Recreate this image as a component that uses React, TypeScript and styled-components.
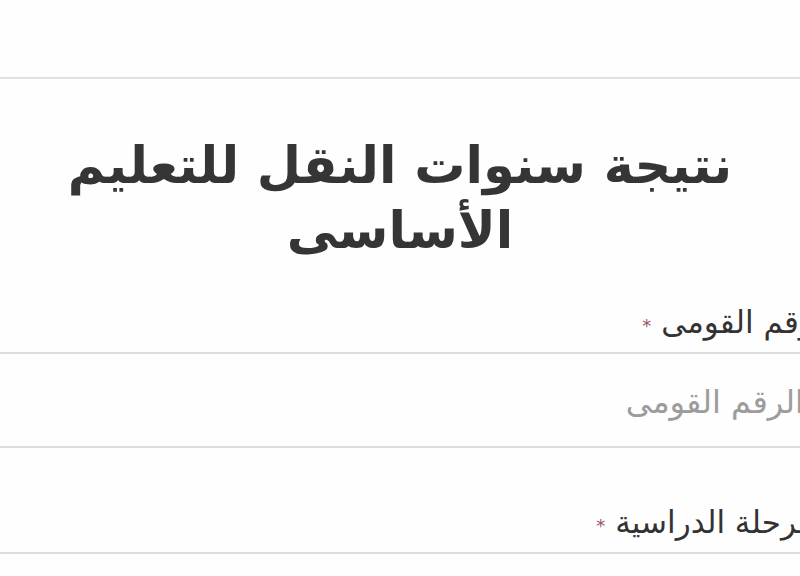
import React from "react"
import styled, { createGlobalStyle } from "styled-components"

const GlobalStyle = createGlobalStyle`
  html, body {
    margin: 0;
    padding: 0;
    background: #fefefe;
  }
  body {
    font-family: "DejaVu Sans", sans-serif;
    overflow: hidden;
  }
`

const Page = styled.div`
  width: 800px;
  height: 576px;
  overflow: hidden;
  background: #fefefe;
`

const Header = styled.div`
  height: 77px;
  border-bottom: 2px solid #e0e0e0;
`

const Title = styled.h1`
  direction: rtl;
  margin: 0;
  padding: 54px 40px 0;
  text-align: center;
  font-size: 51px;
  line-height: 65px;
  font-weight: 700;
  color: #353535;
`

const Form = styled.form`
  direction: rtl;
  margin: 41px -44px 0 -20px;
`

const Field = styled.div`
  display: flex;
  flex-direction: column;
`

const Label = styled.label`
  display: flex;
  align-items: center;
  gap: 10px;
  font-size: 31px;
  line-height: 36px;
  color: #333333;
  padding: 0 10px 12px;
`

const Required = styled.span`
  color: #a0505e;
  font-size: 18px;
  line-height: 1;
  margin-top: 8px;
`

const Input = styled.input`
  direction: rtl;
  height: 96px;
  box-sizing: border-box;
  border: 2px solid #dcdcdc;
  background: transparent;
  padding: 4px 38px 0 10px;
  font-family: "DejaVu Sans", sans-serif;
  font-size: 32px;
  color: #333;
  outline: none;
  &::placeholder {
    color: #9c9c9c;
  }
`

const Spacer = styled.div`
  height: 56px;
`

const Select = styled.div`
  height: 40px;
  border-top: 2px solid #dcdcdc;
`

export default function App() {
  return (
    <Page>
      <GlobalStyle />
      <Header />
      <Title>نتيجة سنوات النقل للتعليم الأساسى</Title>
      <Form>
        <Field>
          <Label>
            الرقم القومى <Required>*</Required>
          </Label>
          <Input placeholder="الرقم القومى" />
        </Field>
        <Spacer />
        <Field>
          <Label>
            المرحلة الدراسية <Required>*</Required>
          </Label>
          <Select />
        </Field>
      </Form>
    </Page>
  )
}
